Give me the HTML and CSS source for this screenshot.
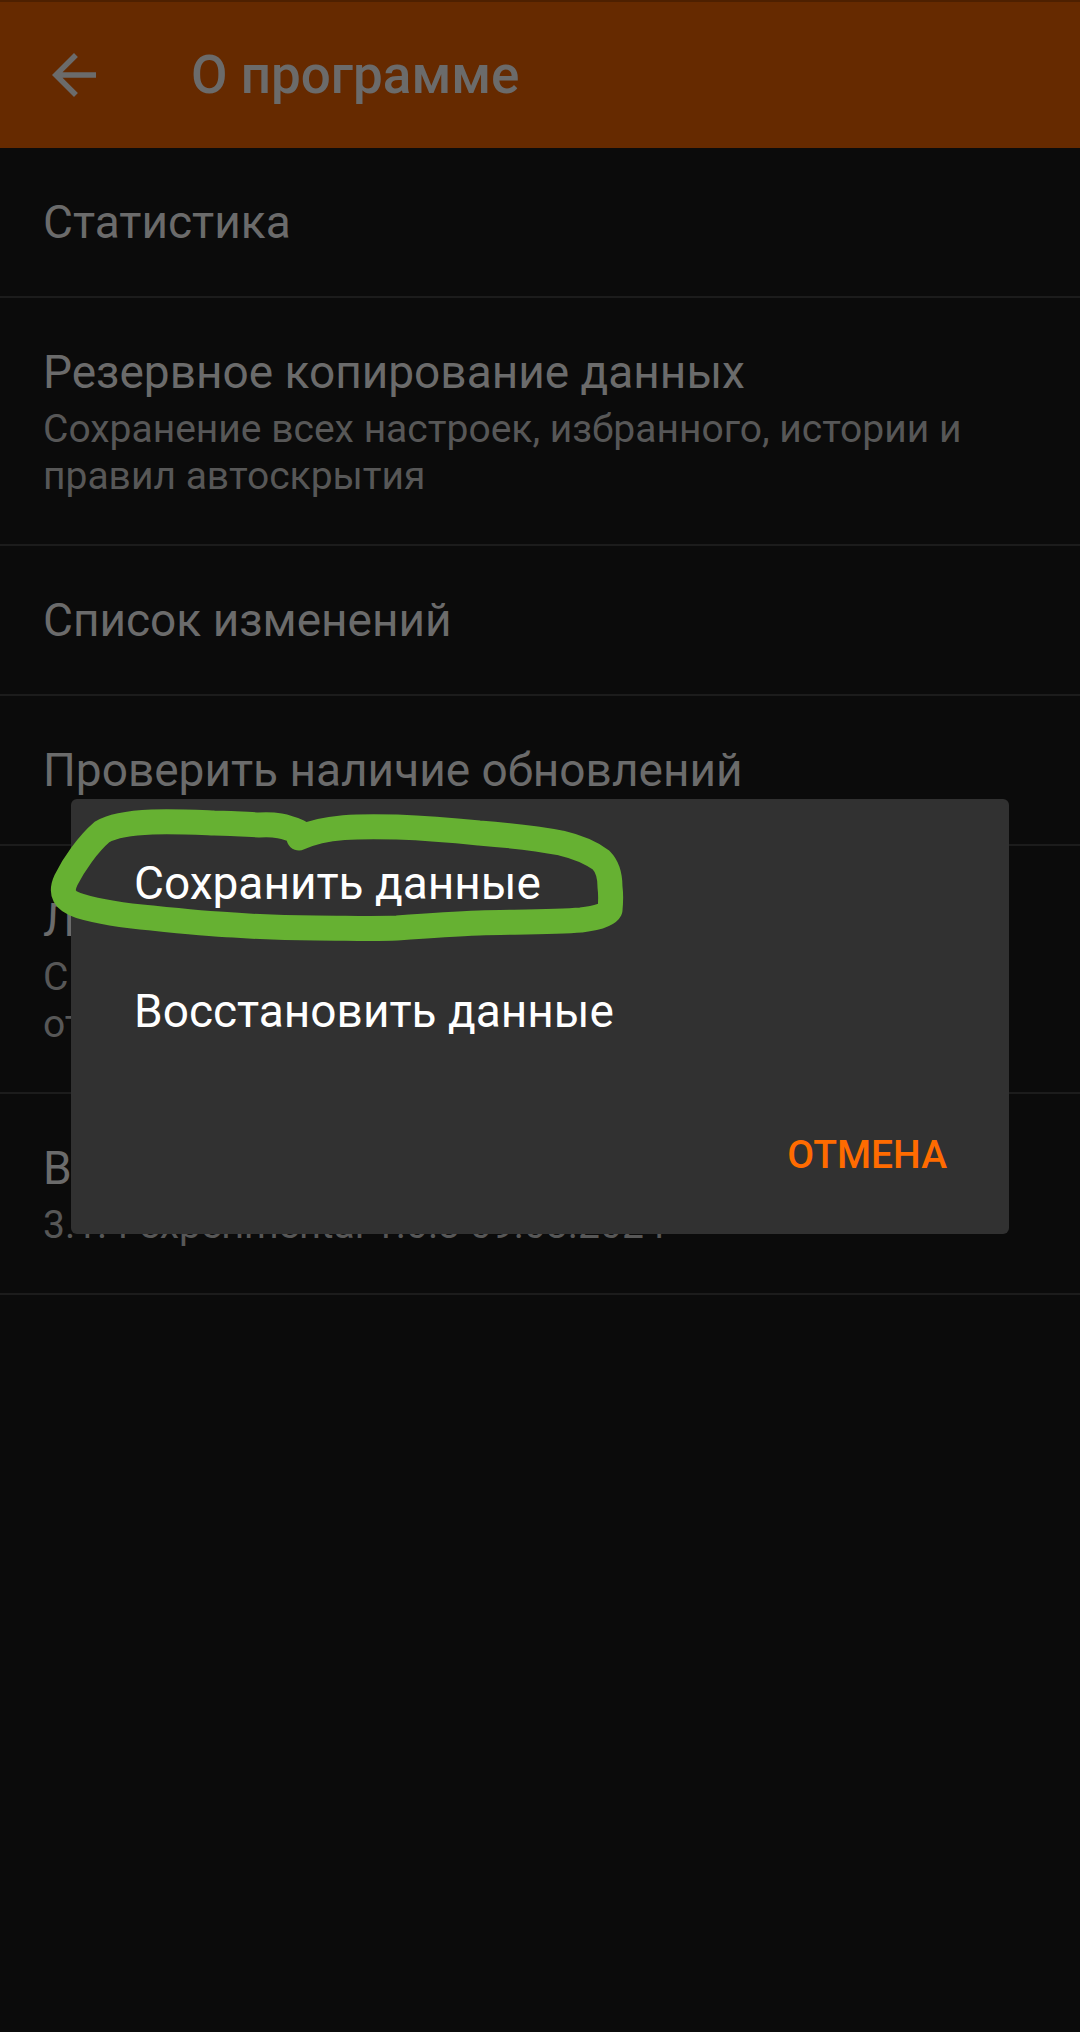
FILE: index.html
```html
<!DOCTYPE html>
<html lang="ru">
<head>
    <meta charset="UTF-8">
    <meta name="viewport" content="width=device-width, initial-scale=1.0">
    <title>О программе</title>
    <link rel="stylesheet" href="styles.css">
</head>
<body>
    <div class="screen">
        <!-- верхняя панель -->
        <header class="toolbar">
            <svg class="back" viewBox="0 0 24 24" width="66" height="66">
                <path d="M20 11H7.83l5.59-5.59L12 4l-8 8 8 8 1.41-1.41L7.83 13H20v-2z"/>
            </svg>
            <h1 class="title">О программе</h1>
        </header>

        <!-- список настроек -->
        <ul class="prefs">
            <li class="pref">
                <div class="pref-title">Статистика</div>
            </li>
            <li class="pref has-sum">
                <div class="pref-title">Резервное копирование данных</div>
                <div class="pref-sum">Сохранение всех настроек, избранного, истории и правил автоскрытия</div>
            </li>
            <li class="pref">
                <div class="pref-title">Список изменений</div>
            </li>
            <li class="pref">
                <div class="pref-title">Проверить наличие обновлений</div>
            </li>
            <li class="pref has-sum">
                <div class="pref-title">Лицензии</div>
                <div class="pref-sum">Сведения о сторонних библиотеках и лицензиях<br>открытого программного обеспечения</div>
            </li>
            <li class="pref has-sum">
                <div class="pref-title">Версия</div>
                <div class="pref-sum">3.1.4 experimental 1.0.3 09.03.2024</div>
            </li>
        </ul>

        <!-- диалог -->
        <div class="dialog">
            <ul class="choices">
                <li>Сохранить данные</li>
                <li>Восстановить данные</li>
            </ul>
            <div class="actions">
                <span class="btn">ОТМЕНА</span>
            </div>
        </div>

        <!-- пометка от руки -->
        <svg class="mark" viewBox="0 0 1080 2032" width="1080" height="2032">
            <path d="M299 832 C 285 826, 275 824, 259 825 C 240 824, 225 823, 214 823 C 190 822, 170 821, 152 822 C 128 823, 112 826, 102 832 C 88 844, 74 864, 66 880 C 60 893, 64 901, 80 906 C 100 912, 128 916, 152 918 C 180 921, 210 924, 234 925 C 260 927, 290 928, 316 928 C 345 928, 372 929, 397 928 C 425 926, 455 924, 479 923 C 515 922, 555 922, 581 920 C 600 918, 608 914, 610 910 C 611 900, 611 895, 610 887 C 610 875, 607 866, 601 860 C 590 852, 578 847, 561 843 C 535 838, 505 835, 479 833 C 450 830, 425 828, 397 827 C 360 826, 325 826, 299 838"
                  fill="none" stroke="#66b132" stroke-width="25" stroke-linecap="round" stroke-linejoin="round"/>
        </svg>
    </div>
</body>
</html>
```

FILE: styles.css
```css
*{
    margin: 0;
    padding: 0;
    box-sizing: border-box;
}
body{
    background-color: #0b0b0b;
    font-family: Roboto, "Noto Sans", "Liberation Sans", sans-serif;
}
.screen{
    position: relative;
    width: 1080px;
    height: 2032px;
    overflow: hidden;
}
.toolbar{
    height: 148px;
    background-color: #662a00;
    border-top: 2px solid #4e2000;
    display: flex;
    align-items: center;
}
.back{
    margin-left: 41px;
    fill: #6b6b6b;
    flex-shrink: 0;
}
.title{
    margin-left: 84px;
    font-size: 53px;
    font-weight: 500;
    color: #6b6b6b;
    line-height: 66px;
}
.prefs{
    list-style: none;
}
.pref{
    padding: 46px 30px 46px 43px;
    border-bottom: 2px solid #1c1c1c;
}
.pref.has-sum{
    padding-bottom: 44px;
}
.pref-title{
    font-size: 46px;
    line-height: 56px;
    color: #6b6b6b;
}
.pref-sum{
    margin-top: 6px;
    font-size: 39px;
    line-height: 47px;
    color: #575757;
}
.dialog{
    position: absolute;
    top: 799px;
    left: 71px;
    width: 938px;
    height: 435px;
    background-color: #313131;
    border-radius: 6px;
    padding-top: 20px;
}
.choices{
    list-style: none;
}
.choices li{
    height: 128px;
    padding: 36px 0 0 63px;
    font-size: 46px;
    line-height: 56px;
    color: #ffffff;
}
.actions{
    display: flex;
    justify-content: flex-end;
    padding: 57px 62px 0 0;
}
.btn{
    font-size: 39px;
    line-height: 47px;
    font-weight: 500;
    color: #ff6b00;
}
.mark{
    position: absolute;
    left: 0;
    top: 0;
    pointer-events: none;
}
```
